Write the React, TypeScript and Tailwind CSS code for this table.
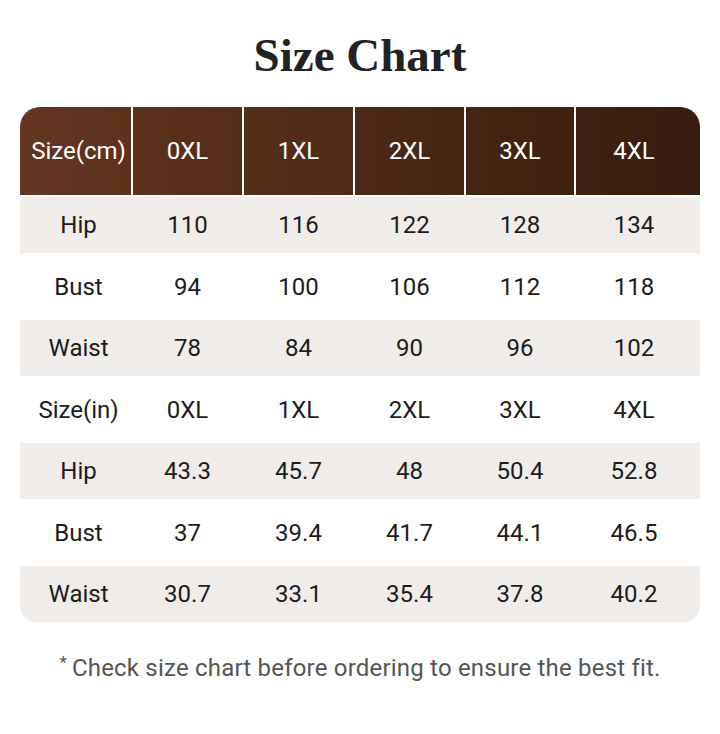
import React from "react";

const sizes = ["0XL", "1XL", "2XL", "3XL", "4XL"];

const rows: { label: string; values: string[] }[] = [
    { label: "Hip", values: ["110", "116", "122", "128", "134"] },
    { label: "Bust", values: ["94", "100", "106", "112", "118"] },
    { label: "Waist", values: ["78", "84", "90", "96", "102"] },
    { label: "Size(in)", values: ["0XL", "1XL", "2XL", "3XL", "4XL"] },
    { label: "Hip", values: ["43.3", "45.7", "48", "50.4", "52.8"] },
    { label: "Bust", values: ["37", "39.4", "41.7", "44.1", "46.5"] },
    { label: "Waist", values: ["30.7", "33.1", "35.4", "37.8", "40.2"] },
];

const cols = "grid grid-cols-[111px_109px_109px_109px_108px_1fr] gap-x-[2px]";

const App = (): React.ReactElement => {
    return (
        <div className="w-[720px] h-[734px] bg-white font-['Roboto',sans-serif] text-[#1c1c1c]">
            <h1 className="pt-[27px] h-[107px] text-center font-['Liberation_Serif',serif] font-bold text-[47px] leading-[56px] text-[#222]">
                Size Chart
            </h1>

            <div className="mx-[20px]">
                <div
                    className={`${cols} h-[88px] rounded-t-[20px] overflow-hidden bg-white`}
                >
                    {["Size(cm)", ...sizes].map((s, i) => (
                        <div
                            key={s}
                            className={`flex items-center justify-center text-white text-[24px] ${
                                i === 0
                                    ? "bg-gradient-to-r from-[#633620] to-[#5c321b] pl-[6px]"
                                    : i === 1
                                    ? "bg-gradient-to-r from-[#5b311b] to-[#552e19]"
                                    : i === 2
                                    ? "bg-gradient-to-r from-[#552e19] to-[#4e2a17]"
                                    : i === 3
                                    ? "bg-gradient-to-r from-[#4d2916] to-[#462514]"
                                    : i === 4
                                    ? "bg-gradient-to-r from-[#452513] to-[#3f2112]"
                                    : "bg-gradient-to-r from-[#3e2112] to-[#361c10] pr-[8px]"
                            }`}
                        >
                            {s}
                        </div>
                    ))}
                </div>

                <div className="mt-[2px]">
                    {rows.map((r, i) => (
                        <div
                            key={i}
                            className={`${cols} items-center text-[24px] ${
                                i % 2 === 0 ? "h-[56px] bg-[#efecea]" : "h-[67px]"
                            } ${i === rows.length - 1 ? "rounded-b-[16px]" : ""}`}
                        >
                            <div className="text-center pl-[6px]">{r.label}</div>
                            {r.values.map((v, j) => (
                                <div key={j} className={`text-center ${j === 4 ? "pr-[8px]" : ""}`}>
                                    {v}
                                </div>
                            ))}
                        </div>
                    ))}
                </div>
            </div>

            <p className="mt-[28px] text-center text-[24px] tracking-[0.2px] text-[#555]">
                <span className="relative -top-[8px] text-[17px] mr-[5px]">*</span>
                Check size chart before ordering to ensure the best fit.
            </p>
        </div>
    );
};

export default App;
